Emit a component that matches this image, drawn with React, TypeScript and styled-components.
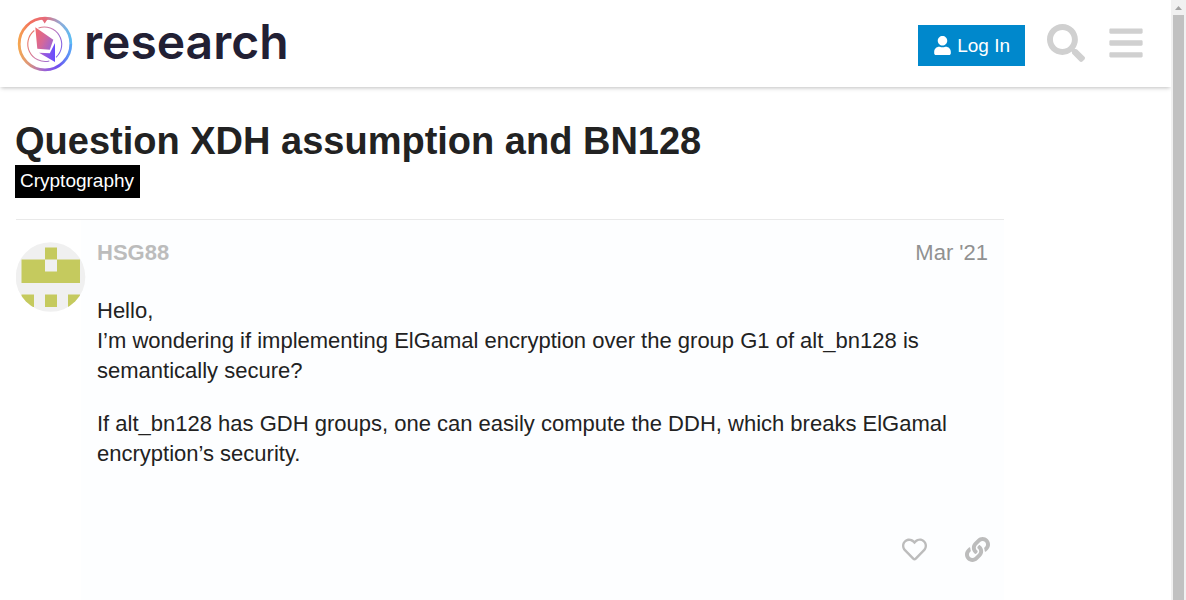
import React from 'react';
import styled, { createGlobalStyle } from 'styled-components';
import { FaBars, FaLink, FaRegHeart, FaSearch, FaUser } from 'react-icons/fa';

const GlobalStyle = createGlobalStyle`
  * { box-sizing: border-box; }
  body {
    margin: 0;
    background: #fff;
    color: #222;
    font-family: "Liberation Sans", Arial, sans-serif;
    font-size: 22px;
    line-height: 30px;
  }
`;

const Shell = styled.div`
  display: flex;
  height: 100vh;
  overflow: hidden;
`;

const Page = styled.div`
  flex: 1;
  min-width: 0;
  overflow: hidden;
`;

const Header = styled.header`
  display: flex;
  align-items: center;
  justify-content: space-between;
  height: 87px;
  padding: 0 26px 0 17px;
  box-shadow: 0 2px 4px -1px rgba(0, 0, 0, 0.25);
`;

const Brand = styled.a`
  display: flex;
  align-items: center;
  gap: 11px;
  color: #222034;
  text-decoration: none;
`;

const Wordmark = styled.span`
  padding-bottom: 4px;
  font-family: Inter, sans-serif;
  font-size: 48px;
  font-weight: 600;
  line-height: 52px;
`;

const HeaderActions = styled.nav`
  display: flex;
  align-items: center;
  gap: 22px;
  padding-bottom: 1px;
`;

const LoginButton = styled.button`
  display: flex;
  align-items: center;
  gap: 5px;
  height: 41px;
  margin-top: 5px;
  padding: 0 15px;
  border: 0;
  background: #0088cc;
  color: #fff;
  font: 19px/24px "Liberation Sans", Arial, sans-serif;
`;

const IconButton = styled.button<{ $tone: string }>`
  display: flex;
  padding: 0;
  border: 0;
  background: none;
  color: ${(p) => p.$tone};
`;

const Topic = styled.main`
  max-width: 1004px;
  padding: 33px 0 0 15px;
`;

const Title = styled.h1`
  margin: 0 0 2px;
  font-size: 38px;
  font-weight: 700;
  line-height: 43px;
`;

const Category = styled.a`
  display: block;
  width: fit-content;
  padding: 4px 6px 5px 5px;
  background: #000;
  color: #fff;
  font-size: 19px;
  line-height: 24px;
  text-decoration: none;
`;

const Post = styled.article`
  display: flex;
  margin: 21px 0 0 1px;
  border-top: 1px solid #e9e9e9;
`;

const AvatarColumn = styled.div`
  flex: none;
  width: 65px;
  padding-top: 22px;

  svg {
    display: block;
    position: relative;
    overflow: visible;
  }
`;

const PostBody = styled.div`
  flex: 1;
  min-width: 0;
  min-height: 400px;
  padding: 18px 14px 0 16px;
  background: #fdfeff;
`;

const PostMeta = styled.div`
  display: flex;
  justify-content: space-between;
  padding-right: 2px;
  margin-bottom: 28px;
`;

const Author = styled.a`
  color: #bcbcbc;
  font-weight: 700;
  text-decoration: none;
`;

const PostDate = styled.a`
  color: #919191;
  text-decoration: none;
`;

const Paragraph = styled.p`
  margin: 0 0 23px;
`;

const PostActions = styled.div`
  display: flex;
  justify-content: flex-end;
  gap: 38px;
  padding-top: 45px;
`;

const ScrollTrack = styled.div`
  display: flex;
  flex-direction: column;
  align-items: center;
  flex: none;
  width: 15px;
  background: #f1f1f1;
`;

const ScrollArrow = styled.svg`
  display: block;
  flex: none;
`;

const ScrollThumb = styled.div`
  flex: 1;
  width: 11px;
  background: #c1c1c1;
`;

const Logo = () => (
  <svg width="56" height="56" viewBox="0 0 56 56" aria-hidden="true">
    <defs>
      <linearGradient id="ringTop" gradientUnits="userSpaceOnUse" x1="1" y1="28" x2="55" y2="28">
        <stop offset="0" stopColor="#f6a84f" />
        <stop offset="0.22" stopColor="#f3705c" />
        <stop offset="0.5" stopColor="#e66b7a" />
        <stop offset="0.78" stopColor="#93a9d5" />
        <stop offset="1" stopColor="#58bdf5" />
      </linearGradient>
      <linearGradient id="ringBottom" gradientUnits="userSpaceOnUse" x1="1" y1="28" x2="55" y2="28">
        <stop offset="0" stopColor="#f6a84f" />
        <stop offset="0.2" stopColor="#dc957b" />
        <stop offset="0.5" stopColor="#9b62d6" />
        <stop offset="0.75" stopColor="#6c50f1" />
        <stop offset="1" stopColor="#58aaf7" />
      </linearGradient>
      <linearGradient id="innerRing" gradientUnits="userSpaceOnUse" x1="10" y1="20" x2="46" y2="36">
        <stop offset="0" stopColor="#ee7b64" />
        <stop offset="0.5" stopColor="#c879b2" />
        <stop offset="1" stopColor="#7661ee" />
      </linearGradient>
      <linearGradient id="gemMain" x1="0" y1="0.2" x2="1" y2="0.8">
        <stop offset="0" stopColor="#f06a70" />
        <stop offset="0.5" stopColor="#d4689a" />
        <stop offset="1" stopColor="#9c63d3" />
      </linearGradient>
      <linearGradient id="gemTail" x1="0" y1="0" x2="1" y2="0">
        <stop offset="0" stopColor="#b263ca" />
        <stop offset="1" stopColor="#674cff" />
      </linearGradient>
    </defs>
    <path d="M2.200 28a25.800 25.800 0 0 1 51.600 0" fill="none" stroke="url(#ringTop)" strokeWidth="2.8" />
    <path d="M53.800 28a25.800 25.800 0 0 1-51.600 0" fill="none" stroke="url(#ringBottom)" strokeWidth="2.8" />
    <path d="M24.500 3h6.500l-1.500 1.800-1.800 2.600-1.800-2.600Z" fill="#e66b7a" />
    <path
      d="M17.300 14.500A17.400 17.400 0 0 0 32.300 45M21.500 12A17.400 17.400 0 0 1 39 41.300"
      fill="none"
      stroke="url(#innerRing)"
      strokeWidth="1.1"
    />
    <path d="M18.300 11.200 36.300 23.800 32.800 33.800 20.300 32.800Z" fill="url(#gemMain)" />
    <path d="M38 27V46L22 36.800l10.800.4Z" fill="url(#gemTail)" />
  </svg>
);

const Avatar = () => (
  <svg width="70" height="70" viewBox="0 0 70 70" role="img" aria-label="HSG88">
    <clipPath id="avatarCircle">
      <circle cx="34.5" cy="35" r="34.8" />
    </clipPath>
    <g clipPath="url(#avatarCircle)">
      <rect width="70" height="70" fill="#f0f0f0" />
      <path
        d="M29 5.500h12v12h23v23.500H5.500V17.500H29ZM5.500 52.500H18v12.500H5.500ZM29 52.500h12v12.500H29ZM52 52.500h12v12.500H52Z"
        fill="#c5ca5e"
      />
      <rect x="29" y="17.5" width="12" height="12" fill="#f0f0f0" />
    </g>
  </svg>
);

export default function App() {
  return (
    <>
      <GlobalStyle />
      <Shell>
        <Page>
          <Header>
            <Brand href="#">
              <Logo />
              <Wordmark>research</Wordmark>
            </Brand>
            <HeaderActions>
              <LoginButton type="button">
                <FaUser size={19} />
                Log In
              </LoginButton>
              <IconButton type="button" aria-label="Search" $tone="#d0d0d0">
                <FaSearch size={38} />
              </IconButton>
              <IconButton type="button" aria-label="Menu" $tone="#d0d0d0">
                <FaBars size={38} />
              </IconButton>
            </HeaderActions>
          </Header>
          <Topic>
            <Title>Question XDH assumption and BN128</Title>
            <Category href="#">Cryptography</Category>
            <Post>
              <AvatarColumn>
                <Avatar />
              </AvatarColumn>
              <PostBody>
                <PostMeta>
                  <Author href="#">HSG88</Author>
                  <PostDate href="#">Mar '21</PostDate>
                </PostMeta>
                <Paragraph>
                  Hello,
                  <br />
                  I’m wondering if implementing ElGamal encryption over the group G1 of alt_bn128 is semantically
                  secure?
                </Paragraph>
                <Paragraph>
                  If alt_bn128 has GDH groups, one can easily compute the DDH, which breaks ElGamal encryption’s
                  security.
                </Paragraph>
                <PostActions>
                  <IconButton type="button" aria-label="Like" $tone="#bcbcbc">
                    <FaRegHeart size={25} />
                  </IconButton>
                  <IconButton type="button" aria-label="Copy link" $tone="#bcbcbc">
                    <FaLink size={25} />
                  </IconButton>
                </PostActions>
              </PostBody>
            </Post>
          </Topic>
        </Page>
        <ScrollTrack aria-hidden="true">
          <ScrollArrow width="15" height="15" viewBox="0 0 15 15">
            <path d="M4 10 7.500 6 11 10Z" fill="#a3a3a3" />
          </ScrollArrow>
          <ScrollThumb />
        </ScrollTrack>
      </Shell>
    </>
  );
}
